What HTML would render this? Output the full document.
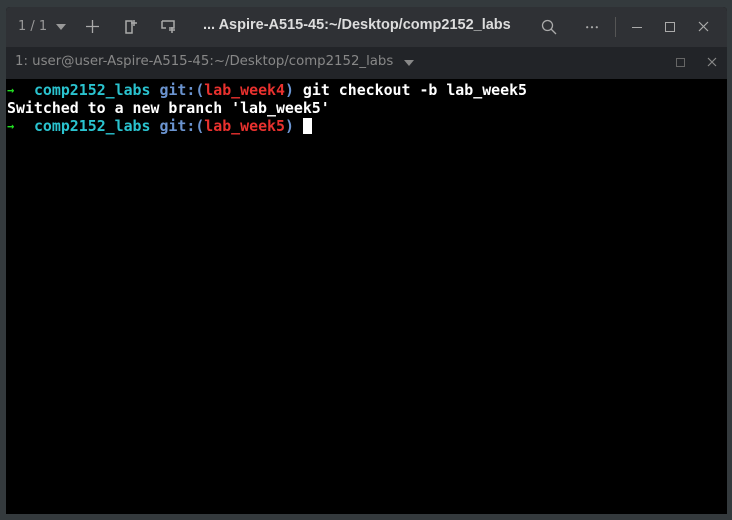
<!DOCTYPE html>
<html><head><style>
body{margin:0;width:732px;height:520px;background:#343a3d;position:relative;overflow:hidden;font-family:"DejaVu Sans","Liberation Sans",sans-serif}
.win{position:absolute;left:6px;top:7px;width:721px;height:507px;background:#000;border-radius:4px 4px 0 0;overflow:hidden}
.title{position:absolute;left:0;top:0;width:721px;height:40px;background:#2f3135;color:#bbb;font-size:13px}
.tabs{position:absolute;left:0;top:40px;width:721px;height:32px;background:#222428;color:#888;font-size:13px}
.t{position:absolute;white-space:nowrap}
.term{position:absolute;left:1px;top:74px;font-family:"DejaVu Sans Mono",monospace;font-weight:bold;font-size:14.9px;line-height:18px;color:#fff;white-space:pre}
.g{color:#22dd22;display:inline-block;width:9px;overflow:hidden;vertical-align:top;font-size:12px}.c{color:#2ac3cf}.b{color:#6b94d0}.r{color:#e8312e}
.cur{display:inline-block;width:9px;height:16px;background:#fff;vertical-align:-3px}
</style></head><body>
<div class="win">
 <div class="title">
  <div class="t" style="left:12px;top:12px;color:#999">1 / 1</div>
  <svg class="t" style="left:50px;top:17px" width="10" height="6"><path d="M0 0h10L5 6z" fill="#999"/></svg>
  <svg class="t" style="left:80px;top:13px" width="13" height="13"><path d="M6.5 0v13M0 6.5h13" stroke="#aaa" stroke-width="1.3"/></svg>
  <svg class="t" style="left:119px;top:12px" width="14" height="16"><path d="M1 2h6v12H1zM9 1v6M6 4h6" stroke="#aaa" stroke-width="1.5" fill="none"/></svg>
  <svg class="t" style="left:155px;top:13px" width="16" height="14"><path d="M1 1h12v7H8M1 1v7h4M11 7v6M8 10h6" stroke="#aaa" stroke-width="1.5" fill="none"/></svg>
  <div class="t" style="left:197px;top:10px;color:#ddd;font-weight:bold;font-size:14.5px;font-family:'Liberation Sans',sans-serif">... Aspire-A515-45:~/Desktop/comp2152_labs</div>
  <svg class="t" style="left:535px;top:12px" width="16" height="16"><circle cx="6.5" cy="6.5" r="5" stroke="#aaa" stroke-width="1.3" fill="none"/><path d="M10 10l5 5" stroke="#aaa" stroke-width="1.3"/></svg>
  <svg class="t" style="left:580px;top:19px" width="12" height="3"><circle cx="1.2" cy="1.2" r="1.1" fill="#aaa"/><circle cx="6" cy="1.2" r="1.1" fill="#aaa"/><circle cx="10.8" cy="1.2" r="1.1" fill="#aaa"/></svg>
  <div class="t" style="left:609px;top:10px;width:1px;height:20px;background:#555"></div>
  <div class="t" style="left:626px;top:20px;width:10px;height:1px;background:#aaa"></div>
  <div class="t" style="left:659px;top:15px;width:8px;height:8px;border:1px solid #aaa"></div>
  <svg class="t" style="left:692px;top:14px" width="11" height="11"><path d="M1 1l9 9M10 1l-9 9" stroke="#aaa" stroke-width="1.2"/></svg>
 </div>
 <div class="tabs">
  <div class="t" style="left:9px;top:7px;font-size:13.3px">1: user@user-Aspire-A515-45:~/Desktop/comp2152_labs</div>
  <svg class="t" style="left:398px;top:13px" width="10" height="6"><path d="M0 0h10L5 6z" fill="#888"/></svg>
  <div class="t" style="left:670px;top:11px;width:7px;height:7px;border:1px solid #666"></div>
  <svg class="t" style="left:701px;top:10px" width="10" height="10"><path d="M1 1l8 8M9 1l-8 8" stroke="#888" stroke-width="1.2"/></svg>
 </div>
 <div class="term"><span class="g">→</span>  <span class="c">comp2152_labs</span> <span class="b">git:(</span><span class="r">lab_week4</span><span class="b">)</span> git checkout -b lab_week5
Switched to a new branch 'lab_week5'
<span class="g">→</span>  <span class="c">comp2152_labs</span> <span class="b">git:(</span><span class="r">lab_week5</span><span class="b">)</span> <span class="cur"></span></div>
</div>
</body></html>
